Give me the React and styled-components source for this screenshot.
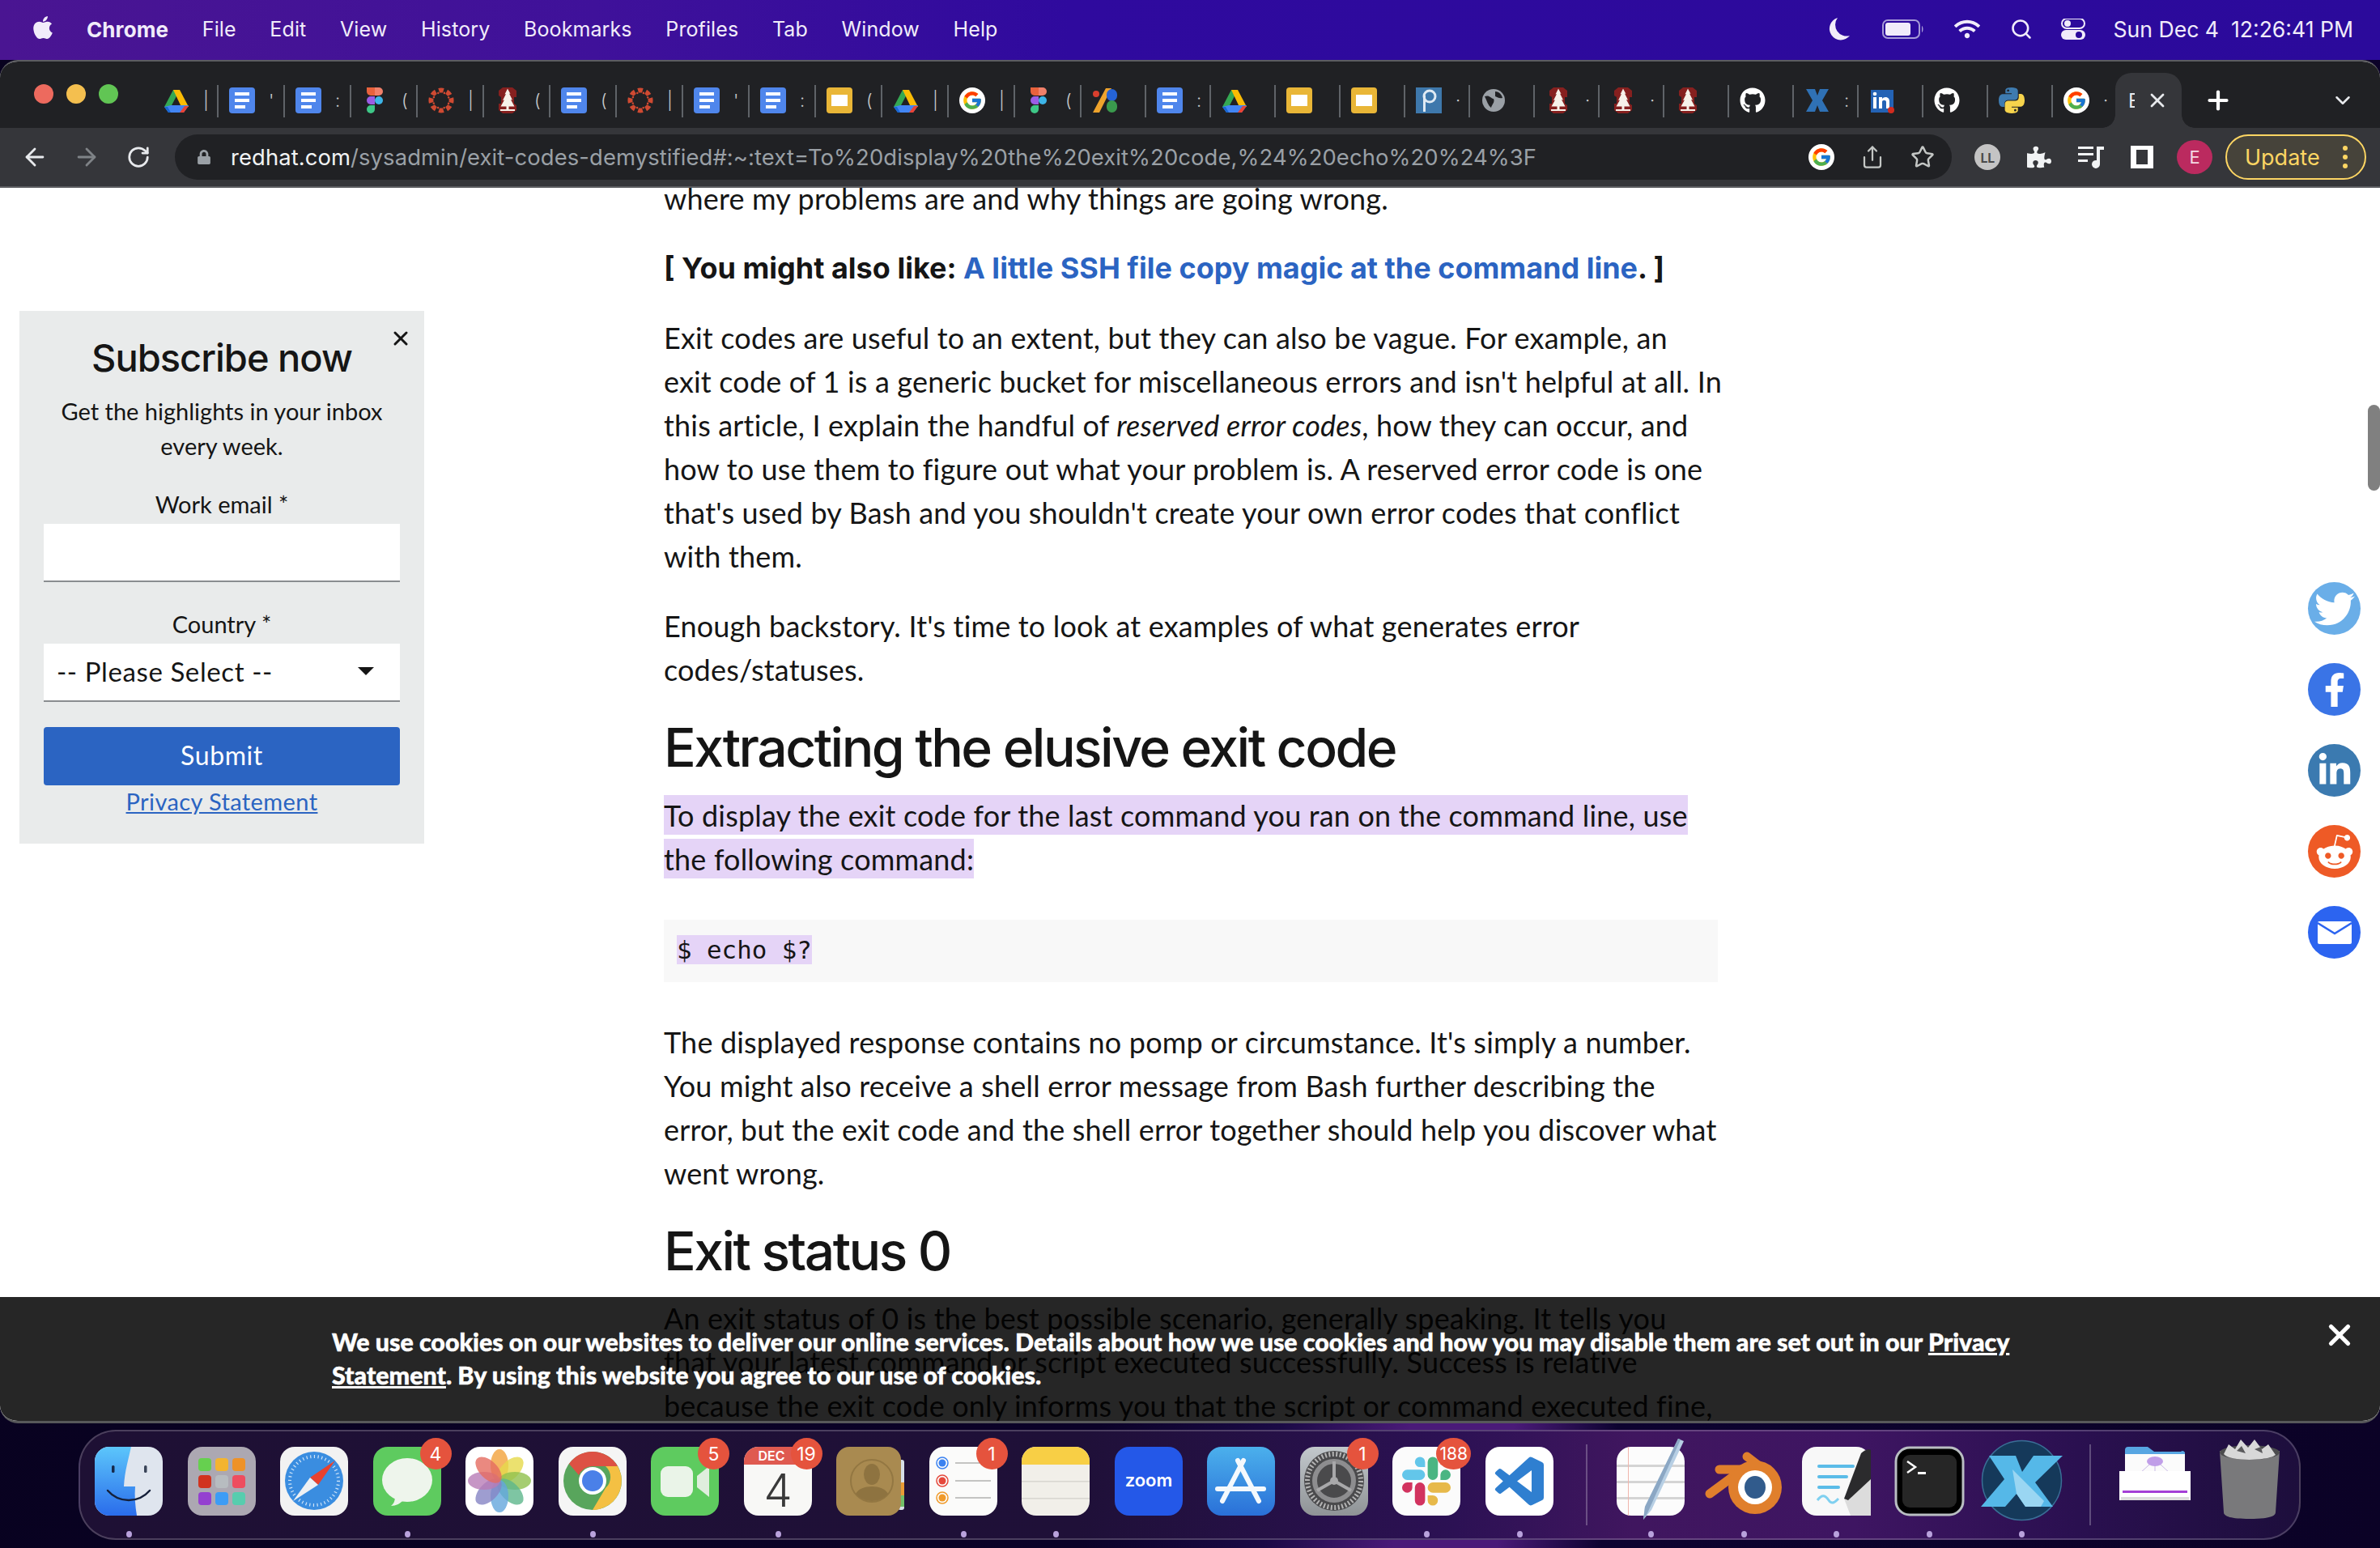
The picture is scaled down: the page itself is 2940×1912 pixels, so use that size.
import React from 'react'
import styled, { createGlobalStyle } from 'styled-components'
import { FaApple, FaGithub, FaTwitter, FaFacebookF, FaLinkedinIn, FaRedditAlien, FaPuzzlePiece, FaLock, FaWifi } from 'react-icons/fa'
import { FcGoogle } from 'react-icons/fc'
import { ArrowLeft, ArrowRight, RotateCw, Star, Share, Search, Plus, X, ChevronDown } from 'lucide-react'

const Global = createGlobalStyle`
  html, body { margin: 0; padding: 0; background: #0b0226; }
  * { box-sizing: border-box; }
  body { font-family: 'Lato', 'Liberation Sans', sans-serif; }
`

const Screen = styled.div`
  width: 2940px;
  height: 1912px;
  display: flex;
  flex-direction: column;
  overflow: hidden;
  background: linear-gradient(98deg, #08021f 0%, #0b0228 50%, #1a0a45 57%, #4a1a78 62%, #4a1a78 66%, #0d0330 70%, #0b0226 100%);
`

/* menu bar */
const MenuBar = styled.div`
  height: 74px;
  flex: none;
  display: flex;
  align-items: center;
  padding: 0 33px 2px 37px;
  color: #f1ecfa;
  background: linear-gradient(90deg, #4a1592 0%, #3f119a 25%, #2f0a9e 45%, #2b0a9b 100%);
  font-family: 'Inter', 'Liberation Sans', sans-serif;
  font-size: 25px;
`
const AppleMark = styled.span`
  display: flex;
  margin: -4px 38px 0 0;
`
const MenuItem = styled.span`
  margin-right: 41.7px;
  font-size: ${p => (p.$bold ? 26 : 25)}px;
  font-weight: ${p => (p.$bold ? 700 : 400)};
  letter-spacing: 0.1px;
`
const MenuRight = styled.div`
  margin-left: auto;
  display: flex;
  align-items: center;
`
const StatusIcon = styled.span`
  width: ${p => p.$w}px;
  display: flex;
  justify-content: center;
`
const Clock = styled.span`
  margin-left: 16px;
  white-space: pre;
  font-size: 26.6px;
`

/* chrome window */
const Window = styled.div`
  height: 1684px;
  flex: none;
  display: flex;
  flex-direction: column;
  border-radius: 22px;
  overflow: hidden;
  border-top: 2px solid #5c5d61;
  border-bottom: 3px solid #57585a;
  background: #fff;
`
const TabStrip = styled.div`
  height: 82px;
  flex: none;
  display: flex;
  align-items: flex-end;
  background: #202124;
`
const Lights = styled.div`
  width: 186px;
  height: 82px;
  flex: none;
  padding: 0 0 3px 42px;
  display: flex;
  align-items: center;
  gap: 16px;
`
const Light = styled.span`
  width: 24px;
  height: 24px;
  border-radius: 50%;
  background: ${p => p.$c};
`
const Tab = styled.div`
  width: ${p => (p.$wide ? 82 : 80)}px;
  height: 82px;
  flex: none;
  display: flex;
  align-items: center;
  padding: 14px 0 0 ${p => (p.$first ? 16 : 15)}px;
  gap: 17px;
  position: relative;
  &::before {
    content: '';
    display: ${p => (p.$first ? 'none' : 'block')};
    position: absolute;
    left: 0;
    top: 29px;
    width: 2px;
    height: 40px;
    background: #5f6368;
  }
`
const Favicon = styled.svg`
  width: 32px;
  height: 32px;
  flex: none;
`
const GithubMark = styled(FaGithub)`
  width: 32px;
  height: 32px;
  flex: none;
  color: #fff;
`
const Sliver = styled.span`
  width: 7px;
  overflow: hidden;
  color: #c9cbcd;
  font-size: 22px;
  font-family: 'Inter', sans-serif;
  font-weight: 300;
`
const ActiveTab = styled.div`
  width: 82px;
  height: 68px;
  flex: none;
  margin-left: -1px;
  background: #35363a;
  border-radius: 20px 20px 0 0;
  color: #e8eaed;
  display: flex;
  align-items: center;
  justify-content: space-between;
  padding: 0 16px 0 16px;
  font-size: 24px;
  font-family: 'Inter', sans-serif;
  position: relative;
  &::before, &::after {
    content: '';
    position: absolute;
    bottom: 0;
    width: 16px;
    height: 16px;
  }
  &::before { left: -16px; background: radial-gradient(circle at 0 0, #202124 15.5px, #35363a 16px); }
  &::after { right: -16px; background: radial-gradient(circle at 100% 0, #202124 15.5px, #35363a 16px); }
`
const ActiveTitle = styled.span`
  width: 8px;
  overflow: hidden;
`
const StripButton = styled.span`
  display: flex;
  align-items: center;
  justify-content: center;
  height: 82px;
  color: ${p => p.$c || '#fff'};
  margin-left: ${p => p.$ml}px;
  padding-top: 14px;
`

const Toolbar = styled.div`
  height: 72px;
  flex: none;
  display: flex;
  align-items: center;
  background: #35363a;
  color: #e8eaed;
`
const NavButton = styled.span`
  width: 64px;
  display: flex;
  justify-content: center;
  color: ${p => p.$c || '#e8eaed'};
  margin-left: ${p => p.$ml || 0}px;
`
const Omnibox = styled.div`
  width: 2195px;
  height: 56px;
  margin-left: 13px;
  border-radius: 28px;
  background: #202124;
  display: flex;
  align-items: center;
  padding-left: 27px;
  flex: none;
`
const Url = styled.span`
  margin-left: 24px;
  font-family: 'Inter', sans-serif;
  font-size: 27.4px;
  color: #9aa0a6;
  white-space: nowrap;
  letter-spacing: 0.1px;
  b { font-weight: 400; color: #f1f3f4; }
`
const OmniIcons = styled.div`
  margin-left: auto;
  display: flex;
  align-items: center;
  gap: 32px;
  padding-right: 21px;
  color: #c4c7c5;
`
const GoogleDot = styled.span`
  width: 32px;
  height: 32px;
  flex: none;
  border-radius: 50%;
  background: #fff;
  display: flex;
  align-items: center;
  justify-content: center;
`
const ToolIcons = styled.div`
  display: flex;
  align-items: center;
  margin-left: 28px;
  gap: 33px;
`
const Ll = styled.span`
  width: 32px;
  height: 32px;
  border-radius: 50%;
  background: #c4c4c4;
  color: #4a4a4a;
  font-size: 17px;
  font-weight: 700;
  display: flex;
  align-items: center;
  justify-content: center;
`
const Avatar = styled.span`
  width: 44px;
  height: 42px;
  margin-left: -4px;
  border-radius: 50%;
  background: #bb2a5f;
  color: #f5d9e3;
  font-family: 'Inter', sans-serif;
  font-size: 22px;
  display: flex;
  align-items: center;
  justify-content: center;
`
const UpdatePill = styled.div`
  width: 174px;
  height: 56px;
  margin-left: 16px;
  border: 2px solid #fdd663;
  border-radius: 28px;
  background: #46433a;
  color: #fdd663;
  font-family: 'Inter', sans-serif;
  font-size: 27px;
  display: flex;
  align-items: center;
  justify-content: space-between;
  padding: 0 21px 0 22px;
`
const Kebab = styled.span`
  display: flex;
  flex-direction: column;
  gap: 5px;
  i { width: 6px; height: 6px; border-radius: 50%; background: #fdd663; display: block; }
`

/* page */
const Page = styled.div`
  flex: 1;
  position: relative;
  overflow: hidden;
  background: #fff;
  border-top: 2px solid #5c5d61;
`
const Article = styled.div`
  width: 1302px;
  margin: -14px 0 0 820px;
  color: #151515;
  font-family: 'Lato', sans-serif;
  font-size: 36px;
  letter-spacing: 0.17px;
  line-height: 54px;
`
const P = styled.p`
  margin: 0 0 32px;
  white-space: nowrap;
  a { color: #2b64c2; text-decoration: none; }
`
const BoldP = styled(P)`
  font-family: 'Inter', sans-serif;
  font-weight: 700;
  font-size: 36px;
  letter-spacing: 0;
`
const H2 = styled.h2`
  margin: 18px 0 19px;
  font-family: 'Inter', sans-serif;
  font-weight: 500;
  font-size: 66px;
  line-height: 74px;
  letter-spacing: -2.55px;
  white-space: nowrap;
`
const Mark = styled.mark`
  background: #e5d4f7;
  color: #151515;
  padding: ${p => (p.$code ? 0 : '2.5px 0')};
`
const CodeBlock = styled.pre`
  margin: 49px 0 47px;
  height: 77px;
  background: #f8f8f8;
  padding: 19px 16px 0;
  font-family: 'DejaVu Sans Mono', monospace;
  font-size: 30.8px;
  letter-spacing: 0;
  line-height: 37px;
`

const Subscribe = styled.aside`
  position: absolute;
  left: 24px;
  top: 152px;
  width: 500px;
  height: 658px;
  background: #e9ebeb;
  padding: 24px 30px 0;
  text-align: center;
  color: #151515;
  font-size: 29px;
`
const SubTitle = styled.h3`
  margin: 3px 0 0;
  font-family: 'Inter', sans-serif;
  font-weight: 500;
  font-size: 47px;
  line-height: 62px;
  letter-spacing: -1px;
`
const SubText = styled.p`
  margin: 13px 0 0;
  line-height: 43px;
`
const Close = styled.span`
  position: absolute;
  top: 19px;
  right: 15px;
  color: #151515;
`
const FieldLabel = styled.div`
  margin-top: ${p => p.$mt}px;
  line-height: 40px;
`
const Field = styled.div`
  height: 72px;
  background: #fff;
  border-bottom: 2px solid #8a8d90;
  display: flex;
  align-items: center;
  justify-content: space-between;
  padding: 0 32px 3px 16px;
  font-size: 33px;
  letter-spacing: 0.6px;
  margin-top: 4px;
`
const Caret = styled.span`
  width: 0;
  height: 0;
  border-left: 10px solid transparent;
  border-right: 10px solid transparent;
  border-top: 10px solid #151515;
`
const SubmitButton = styled.div`
  height: 72px;
  margin-top: 31px;
  padding-bottom: 3px;
  background: #2b64c2;
  border-radius: 4px;
  color: #fff;
  font-size: 32px;
  letter-spacing: 0.6px;
  display: flex;
  align-items: center;
  justify-content: center;
`
const PrivacyLink = styled.a`
  display: block;
  margin-top: 0;
  color: #2b64c2;
  text-decoration: underline;
  line-height: 40px;
  letter-spacing: 0.4px;
`

const Shares = styled.div`
  position: absolute;
  top: 487px;
  right: 24px;
  display: flex;
  flex-direction: column;
  gap: 35px;
`
const ShareDot = styled.span`
  width: 65px;
  height: 65px;
  border-radius: 50%;
  background: ${p => p.$c};
  color: #fff;
  display: flex;
  align-items: center;
  justify-content: center;
`
const Scrollbar = styled.div`
  position: absolute;
  right: 0;
  top: 268px;
  width: 15px;
  height: 106px;
  border-radius: 8px;
  background: #808080;
`
const Cookie = styled.div`
  position: absolute;
  left: 0;
  right: 0;
  bottom: 0;
  height: 153px;
  background: rgba(0, 0, 0, 0.85);
  color: #fff;
  padding: 35px 0 0 410px;
  font-size: 30.4px;
  font-weight: 900;
  line-height: 41px;
  white-space: nowrap;
  -webkit-text-stroke: 0.5px #fff;
  a { color: #fff; text-decoration: underline; }
`
const CookieClose = styled.span`
  position: absolute;
  top: 26px;
  right: 29px;
  color: #fff;
`

/* dock */
const DockArea = styled.div`
  flex: 1;
  padding: 8px 98px 10px 97px;
`
const Dock = styled.div`
  height: 136px;
  border: 2px solid rgba(255, 255, 255, 0.2);
  border-radius: 46px;
  background: linear-gradient(90deg, #1e1034 0%, #1f1038 45%, #2c1154 62%, #40165f 70%, #3e1562 80%, #2a1050 90%, #1d0e3c 100%);
  display: flex;
  padding: 19px 0 0 18px;
`
const Slot = styled.div`
  width: ${p => p.$w || 84}px;
  height: 85px;
  margin-right: ${p => (p.$mr === undefined ? 30.5 : p.$mr)}px;
  flex: none;
  position: relative;
  &::after {
    content: '';
    display: ${p => (p.$dot ? 'block' : 'none')};
    position: absolute;
    left: 50%;
    bottom: -27px;
    width: 7px;
    height: 8px;
    margin-left: -3px;
    border-radius: 50%;
    background: #b9a2dc;
  }
`
const DockSvg = styled.svg`
  width: 100%;
  height: 100%;
  display: block;
  overflow: visible;
`
const Badge = styled.span`
  position: absolute;
  right: -13px;
  top: -11px;
  min-width: 39px;
  height: 39px;
  padding: 0 4px;
  border-radius: 50%;
  background: #e5533d;
  color: #fff;
  font-family: 'Inter', sans-serif;
  font-size: ${p => (p.$small ? 21 : 23)}px;
  display: flex;
  align-items: center;
  justify-content: center;
`
const Divider = styled.span`
  width: 2px;
  height: 100px;
  margin: -3px ${p => p.$mr}px 0 0;
  flex: none;
  background: rgba(255, 255, 255, 0.25);
`

function Drive() {
  return <Favicon viewBox="0 0 32 32">
    <polygon points="12,3 20,3 9,24 1,24" fill="#34a853" />
    <polygon points="20,3 31,24 22,24 12,3" fill="#fbbc04" />
    <polygon points="9,22 31,22 25,31 6,31 1,24" fill="#4285f4" />
    <polygon points="31,23 25,31 20,31 26,23" fill="#ea4335" />
    <polygon points="1,24 6,31 9,31 5,24" fill="#1967d2" />
  </Favicon>
}
function Doc() {
  return <Favicon viewBox="0 0 32 32">
    <rect width="32" height="32" rx="4" fill="#4f86ec" />
    <rect x="7" y="6" width="18" height="4" fill="#fff" />
    <rect x="7" y="14" width="18" height="4" fill="#fff" />
    <rect x="7" y="22" width="13" height="4" fill="#fff" />
  </Favicon>
}
function Slides() {
  return <Favicon viewBox="0 0 32 32">
    <rect width="32" height="32" rx="4" fill="#e9b637" />
    <rect x="6" y="9" width="20" height="14" fill="#fff" />
  </Favicon>
}
function Figma() {
  return <Favicon viewBox="0 0 32 32">
    <path d="M6 0h10v10H11a5 5 0 0 1-5-5z" fill="#e8623d" />
    <path d="M16 0h5a5 5 0 0 1 0 10h-5z" fill="#f0806a" />
    <path d="M11 11h5v10h-5a5 5 0 0 1 0-10z" fill="#9b5de5" />
    <circle cx="21" cy="16" r="5" fill="#3db5e8" />
    <path d="M11 22h5v5a5 5 0 1 1-5-5z" fill="#3ec787" />
  </Favicon>
}
function Canvas() {
  const spokes = [0, 45, 90, 135, 180, 225, 270, 315]
  return <Favicon viewBox="0 0 32 32">
    {spokes.map(a => <g key={a} transform={`rotate(${a} 16 16)`}>
      <path d="M12.300 .9a15.500 15.500 0 0 1 7.400 0L18 6.600a9.500 9.500 0 0 0-4 0z" fill="#cf4a32" />
      <circle cx="19.900" cy="6.900" r="1.300" fill="#cf4a32" />
    </g>)}
  </Favicon>
}
function Stanford() {
  return <Favicon viewBox="0 0 32 32">
    <path d="M10 0h12l5 4v8h-3v8l3 2v6l-5 4H10l-5-4v-8h3v-8l-3-2V4z" fill="#86201f" />
    <path d="M16 1.500l3.500 6.500-1.500-.5 4 8-2-.5 4.500 8.500h-7v4h-3v-4h-7L12 15.500l-2 .5 4-8-1.500.5z" fill="#f7f2ea" />
    <rect x="7" y="27" width="18" height="2" fill="#f7f2ea" />
  </Favicon>
}
function Google() {
  return <GoogleDot><FcGoogle size={26} /></GoogleDot>
}
function XColors() {
  return <Favicon viewBox="0 0 32 32">
    <circle cx="5" cy="8" r="4" fill="#d93f2e" />
    <polygon points="17,1 24,1 9,31 1,31" fill="#eea32c" />
    <rect x="18" y="2" width="13" height="15" rx="6.500" fill="#2563d6" />
    <rect x="18" y="16" width="13" height="15" rx="6.500" fill="#3a9a4d" />
  </Favicon>
}
function Piazza() {
  return <Favicon viewBox="0 0 32 32">
    <rect width="32" height="32" fill="#3e78ac" />
    <circle cx="17" cy="11" r="7" fill="none" stroke="#dfeaf3" strokeWidth="3" />
    <rect x="9" y="10" width="3" height="20" fill="#dfeaf3" />
  </Favicon>
}
function Globe() {
  return <Favicon viewBox="0 0 32 32">
    <circle cx="16" cy="16" r="14" fill="#9aa0a6" />
    <path d="M5 11c6-2 7 2 11 3 2 4-2 7-3 11-4-3-5-8-8-14zM18 5c5 0 8 4 9 8-4 1-6-1-9-2z" fill="#202124" />
  </Favicon>
}
function Github() {
  return <GithubMark />
}
function XBlue() {
  return <Favicon viewBox="0 0 32 32">
    <path d="M2 2h11l3 8 3-8h11l-8 14 8 14H19l-3-8-3 8H2l8-14z" fill="#2f71b5" />
  </Favicon>
}
function Linkedin() {
  return <Favicon viewBox="0 0 32 32">
    <rect x="2" y="3" width="28" height="28" fill="#2463b5" />
    <rect x="5" y="12" width="4" height="14" fill="#fff" />
    <circle cx="7" cy="8" r="2.300" fill="#fff" />
    <path d="M12 12h4v2c2-3 9-3 9 3v9h-4v-8c0-3-5-3-5 0v8h-4z" fill="#fff" />
    <circle cx="27" cy="28" r="4" fill="#d22c1f" />
  </Favicon>
}
function Python() {
  return <Favicon viewBox="0 0 24 24">
    <path d="M11.914 0C5.82 0 6.2 2.656 6.2 2.656l.007 2.752h5.814v.826H3.9S0 5.789 0 11.969c0 6.18 3.403 5.96 3.403 5.96h2.03v-2.867s-.109-3.42 3.35-3.42h5.766s3.24.052 3.24-3.148V3.202S18.28 0 11.913 0zM8.708 1.85c.578 0 1.046.47 1.046 1.052 0 .581-.468 1.051-1.046 1.051-.579 0-1.046-.47-1.046-1.051 0-.582.467-1.052 1.046-1.052z" fill="#3e7bb0" />
    <path d="M12.087 24c6.092 0 5.712-2.656 5.712-2.656l-.007-2.752h-5.814v-.826h8.123s3.9.445 3.9-5.735c0-6.18-3.404-5.96-3.404-5.96h-2.03v2.867s.109 3.42-3.35 3.42H8.95s-3.24-.052-3.24 3.148v5.292S5.72 24 12.087 24zm3.206-1.850c-.578 0-1.046-.47-1.046-1.052 0-.581.468-1.051 1.046-1.051.579 0 1.046.47 1.046 1.051 0 .582-.467 1.052-1.046 1.052z" fill="#f7d44c" />
  </Favicon>
}

const tabs = [
  [Drive, '|', 1], [Doc, "'", 1], [Doc, ':', 1], [Figma, '(', 1], [Canvas, '|', 1], [Stanford, '(', 1], [Doc, '(', 1],
  [Canvas, '|', 1], [Doc, "'", 1], [Doc, ':', 1], [Slides, '(', 1], [Drive, '|', 1], [Google, '|', 1], [Figma, '(', 1],
  [XColors, ''], [Doc, ':'], [Drive, ''], [Slides, ''], [Slides, ''], [Piazza, '·'], [Globe, ''], [Stanford, '·'],
  [Stanford, '·'], [Stanford, ''], [Github, ''], [XBlue, ':'], [Linkedin, ''], [Github, ''], [Python, ''], [Google, '·'],
]

const DockIcons = {
  finder: <DockSvg viewBox="0 0 84 85">
    <defs><linearGradient id="fb" x1="0" y1="0" x2="0" y2="1"><stop offset="0" stopColor="#5cc6fb" /><stop offset="1" stopColor="#2a6ceb" /></linearGradient></defs>
    <rect width="84" height="85" rx="18" fill="#dfe5ee" />
    <path d="M18 0h27c-3 14-8 30-9 49h14c-1 12 0 24 2 36H18A18 18 0 0 1 0 67V18A18 18 0 0 1 18 0z" fill="url(#fb)" />
    <rect x="21" y="23" width="3.500" height="9" rx="1.500" fill="#16294b" />
    <rect x="61" y="23" width="3.500" height="9" rx="1.500" fill="#3a4458" />
    <path d="M16 54c14 16 38 16 52 0" fill="none" stroke="#15203a" strokeWidth="2.500" strokeLinecap="round" />
  </DockSvg>,
  launchpad: <DockSvg viewBox="0 0 84 85">
    <rect width="84" height="85" rx="18" fill="#aca8b2" />
    {[['#66d04f', 13, 14], ['#f3b42f', 34, 14], ['#ee9228', 55, 14], ['#d1331f', 13, 35], ['#b7bcc0', 34, 35], ['#ee4d5f', 55, 35], ['#9440d0', 13, 56], ['#3d9cf5', 34, 56], ['#57cdae', 55, 56]].map(([c, x, y]) =>
      <rect key={c} x={x} y={y} width="16" height="16" rx="4" fill={c} />)}
  </DockSvg>,
  safari: <DockSvg viewBox="0 0 84 85">
    <rect width="84" height="85" rx="18" fill="#f2f2f2" />
    <circle cx="42" cy="42" r="36" fill="#3a8de0" />
    <circle cx="42" cy="42" r="30" fill="none" stroke="#cfe4f8" strokeWidth="4" strokeDasharray="1.200 3.500" />
    <polygon points="68,17 47,47 37,38" fill="#e8412e" />
    <polygon points="16,67 47,47 37,38" fill="#eef1f4" />
  </DockSvg>,
  messages: <DockSvg viewBox="0 0 84 85">
    <rect width="84" height="85" rx="18" fill="#5ecb5f" />
    <ellipse cx="42" cy="41" rx="31" ry="27" fill="#eef5ec" />
    <path d="M27 60c0 6-1 10-5 13 6 0 12-3 16-8z" fill="#eef5ec" />
  </DockSvg>,
  photos: <DockSvg viewBox="0 0 84 85">
    <rect width="84" height="85" rx="18" fill="#fff" />
    {[['#f2a33c', 0], ['#e6d94b', 45], ['#90c14d', 90], ['#5eb68c', 135], ['#64a6dc', 180], ['#8684c4', 225], ['#b87cb6', 270], ['#e56b60', 315]].map(([c, a]) =>
      <ellipse key={a} cx="42" cy="23" rx="11" ry="20" fill={c} opacity="0.8" transform={`rotate(${a} 42 42)`} />)}
  </DockSvg>,
  chrome: <DockSvg viewBox="0 0 84 85">
    <rect width="84" height="85" rx="18" fill="#f5f5f5" />
    <circle cx="42" cy="42" r="36" fill="#58a55c" />
    <path d="M42 6a36 36 0 0 1 31 18H42a18 18 0 0 0-17 11L13 21A36 36 0 0 1 42 6z" fill="#dd5144" />
    <path d="M73 24a36 36 0 0 1-31 54l16-27a18 18 0 0 0 0-27z" fill="#f4c043" />
    <circle cx="42" cy="42" r="17" fill="#fff" />
    <circle cx="42" cy="42" r="13" fill="#4a80e8" />
  </DockSvg>,
  facetime: <DockSvg viewBox="0 0 84 85">
    <rect width="84" height="85" rx="18" fill="#5ecb5f" />
    <rect x="12" y="24" width="40" height="38" rx="9" fill="#eaf4e8" />
    <path d="M57 36l15-12v38L57 50z" fill="#dfeedd" />
  </DockSvg>,
  calendar: <DockSvg viewBox="0 0 84 85">
    <rect width="84" height="85" rx="18" fill="#f8f8f6" />
    <path d="M0 22V18A18 18 0 0 1 18 0h48a18 18 0 0 1 18 18v4z" fill="#df5a50" />
    <text x="34" y="17" textAnchor="middle" fill="#fff" fontFamily="Inter, sans-serif" fontWeight="600" fontSize="16">DEC</text>
    <text x="42" y="74" textAnchor="middle" fill="#3a3a3a" fontFamily="Inter, sans-serif" fontWeight="300" fontSize="56">4</text>
  </DockSvg>,
  contacts: <DockSvg viewBox="0 0 84 85">
    <rect x="76" y="16" width="8" height="62" rx="3" fill="#d7dfe6" />
    <rect x="76" y="44" width="8" height="16" fill="#e99b35" />
    <rect x="76" y="60" width="8" height="14" fill="#71bf68" />
    <rect width="80" height="85" rx="16" fill="#a98a50" />
    <circle cx="44" cy="42" r="26" fill="none" stroke="#937742" strokeWidth="2" />
    <ellipse cx="44" cy="34" rx="10" ry="13" fill="#8e7340" />
    <path d="M24 58c6-12 34-12 40 0-10 12-30 12-40 0z" fill="#8e7340" />
  </DockSvg>,
  reminders: <DockSvg viewBox="0 0 84 85">
    <rect width="84" height="85" rx="18" fill="#fbfbfa" />
    {[['#3b82f0', 20], ['#e5483b', 42], ['#f09a2a', 63]].map(([c, y]) => <g key={y}>
      <circle cx="16" cy={y} r="7" fill="none" stroke={c} strokeWidth="1.500" />
      <circle cx="16" cy={y} r="4.500" fill={c} />
      <rect x="32" y={y - 1} width="44" height="2" fill="#c4c4c2" />
    </g>)}
  </DockSvg>,
  notes: <DockSvg viewBox="0 0 84 85">
    <rect width="84" height="85" rx="18" fill="#f1efe9" />
    <path d="M0 22V18A18 18 0 0 1 18 0h48a18 18 0 0 1 18 18v4z" fill="#f8cf45" />
    <rect y="42" width="84" height="1.500" fill="#d8d6d0" />
    <rect y="63" width="84" height="1.500" fill="#d8d6d0" />
  </DockSvg>,
  zoom: <DockSvg viewBox="0 0 84 85">
    <rect width="84" height="85" rx="18" fill="#2458e8" />
    <text x="42" y="49" textAnchor="middle" fill="#fff" fontFamily="Inter, sans-serif" fontWeight="600" fontSize="22">zoom</text>
  </DockSvg>,
  appstore: <DockSvg viewBox="0 0 84 85">
    <defs><linearGradient id="as" x1="0" y1="0" x2="0" y2="1"><stop offset="0" stopColor="#4bb0ec" /><stop offset="1" stopColor="#2a70d8" /></linearGradient></defs>
    <rect width="84" height="85" rx="18" fill="url(#as)" />
    <g stroke="#f4f9fd" strokeWidth="6" strokeLinecap="round" fill="none">
      <path d="M45 17L19 67" /><path d="M38 17l26 50" /><path d="M13 52h57" />
    </g>
  </DockSvg>,
  prefs: <DockSvg viewBox="0 0 84 85">
    <defs><linearGradient id="pr" x1="0" y1="0" x2="0" y2="1"><stop offset="0" stopColor="#c2c8cc" /><stop offset="1" stopColor="#8f9396" /></linearGradient></defs>
    <rect width="84" height="85" rx="18" fill="url(#pr)" />
    <circle cx="42" cy="42" r="37" fill="#4a4a4c" />
    <circle cx="42" cy="42" r="33" fill="none" stroke="#b5b5b5" strokeWidth="6" strokeDasharray="2 2.500" />
    <circle cx="42" cy="42" r="24" fill="none" stroke="#8d8d8f" strokeWidth="6" />
    <g stroke="#a8a8aa" strokeWidth="4"><path d="M42 42V18" /><path d="M42 42l21 12" /><path d="M42 42L21 54" /></g>
    <circle cx="42" cy="42" r="5" fill="#a8a8aa" />
  </DockSvg>,
  slack: <DockSvg viewBox="0 0 84 85">
    <rect width="84" height="85" rx="18" fill="#fbfbfb" />
    <g transform="translate(12 12.500) scale(2.500)">
      <path d="M5.042 15.165a2.528 2.528 0 0 1-2.52 2.523A2.528 2.528 0 0 1 0 15.165a2.527 2.527 0 0 1 2.522-2.52h2.52v2.52zM6.313 15.165a2.527 2.527 0 0 1 2.521-2.52 2.527 2.527 0 0 1 2.521 2.52v6.313A2.528 2.528 0 0 1 8.834 24a2.528 2.528 0 0 1-2.521-2.522v-6.313z" fill="#d2335f" />
      <path d="M8.834 5.042a2.528 2.528 0 0 1-2.521-2.52A2.528 2.528 0 0 1 8.834 0a2.528 2.528 0 0 1 2.521 2.522v2.52H8.834zM8.834 6.313a2.528 2.528 0 0 1 2.521 2.521 2.528 2.528 0 0 1-2.521 2.521H2.522A2.528 2.528 0 0 1 0 8.834a2.528 2.528 0 0 1 2.522-2.521h6.312z" fill="#63c6ea" />
      <path d="M18.956 8.834a2.528 2.528 0 0 1 2.522-2.521A2.528 2.528 0 0 1 24 8.834a2.528 2.528 0 0 1-2.522 2.521h-2.522V8.834zM17.688 8.834a2.528 2.528 0 0 1-2.523 2.521 2.527 2.527 0 0 1-2.52-2.521V2.522A2.527 2.527 0 0 1 15.165 0a2.528 2.528 0 0 1 2.523 2.522v6.312z" fill="#4ab583" />
      <path d="M15.165 18.956a2.528 2.528 0 0 1 2.523 2.522A2.528 2.528 0 0 1 15.165 24a2.527 2.527 0 0 1-2.52-2.522v-2.522h2.52zM15.165 17.688a2.527 2.527 0 0 1-2.52-2.523 2.526 2.526 0 0 1 2.52-2.52h6.313A2.527 2.527 0 0 1 24 15.165a2.528 2.528 0 0 1-2.522 2.523h-6.313z" fill="#e7b94a" />
    </g>
  </DockSvg>,
  vscode: <DockSvg viewBox="0 0 84 85">
    <rect width="84" height="85" rx="18" fill="#fff" />
    <g transform="translate(12 12.500) scale(2.500)">
      <path d="M23.15 2.587L18.21.21a1.494 1.494 0 0 0-1.705.29l-9.46 8.63-4.12-3.128a.999.999 0 0 0-1.276.057L.327 7.261A1 1 0 0 0 .326 8.74L3.899 12 .326 15.26a1 1 0 0 0 .001 1.479L1.65 17.94a.999.999 0 0 0 1.276.057l4.12-3.128 9.46 8.63a1.492 1.492 0 0 0 1.704.29l4.942-2.377A1.500 1.500 0 0 0 24 20.06V3.939a1.500 1.500 0 0 0-.85-1.352zm-5.146 14.861L10.826 12l7.178-5.448v10.896z" fill="#2f7fd0" />
    </g>
  </DockSvg>,
  textedit: <DockSvg viewBox="0 0 84 85">
    <rect width="84" height="85" rx="18" fill="#fcfcfc" />
    {[22, 42, 62].map(y => <rect key={y} y={y} width="84" height="3" fill="#d4d4d4" />)}
    <rect x="14" width="1" height="85" fill="#f0b5ac" />
    <polygon points="76,-10 83,-7 43,78 33,90 35,74" fill="#b7cfe4" />
    <polygon points="76,-10 79,-9 38,82 33,90 35,74" fill="#8ba7c4" />
  </DockSvg>,
  blender: <DockSvg viewBox="0 0 97 85">
    <g stroke="#e07f2c" strokeLinecap="round" fill="none" strokeWidth="11">
      <path d="M52 12L78 32" /><path d="M18 28H54" /><path d="M6 58L44 30" />
    </g>
    <circle cx="62" cy="50" r="33" fill="#e07f2c" />
    <circle cx="62" cy="50" r="21" fill="#fff" />
    <ellipse cx="62" cy="50" rx="13" ry="14" fill="#315b8c" />
  </DockSvg>,
  pen: <DockSvg viewBox="0 0 85 85">
    <rect width="85" height="85" rx="18" fill="#f8f8f8" />
    <g fill="#5bbce8"><rect x="19" y="22" width="46" height="4" rx="2" /><rect x="19" y="35" width="38" height="4" rx="2" /><rect x="19" y="48" width="28" height="4" rx="2" /></g>
    <path d="M19 66c6-8 10-6 14 0s8 2 12-2" fill="none" stroke="#7fd0f0" strokeWidth="3" />
    <path d="M85 85H60L52 64l33-40z" fill="#dcdcdc" />
    <path d="M52 64L73 8c4-4 10-6 12-4v36L57 66z" fill="#2b2b2d" />
  </DockSvg>,
  terminal: <DockSvg viewBox="0 0 85 85">
    <rect x="1" y="1" width="83" height="83" rx="17" fill="#000" stroke="#b9bec2" strokeWidth="3" />
    <rect x="9" y="10" width="67" height="65" rx="9" fill="#262626" />
    <path d="M15 18l10 7-10 7" fill="none" stroke="#fff" strokeWidth="2.500" />
    <rect x="28" y="31" width="10" height="3" fill="#fff" />
  </DockSvg>,
  xlogo: <DockSvg viewBox="0 0 99 85">
    <g transform="translate(0 -8)">
      <ellipse cx="49.500" cy="49.500" rx="49" ry="49" fill="#15395a" stroke="#3a6e96" strokeWidth="1.500" />
      <path d="M9 19h33l8 20 14-20h36L66 52l22 30H54L43 66 29 82H-1l29-34z" fill="#55b8e8" />
      <path d="M38 36L77 75l-4 7H54L43 66z" fill="#9ad6f2" />
    </g>
  </DockSvg>,
  stack: <DockSvg viewBox="0 0 88 85">
    <path d="M7 4a4 4 0 0 1 4-4h24l8 6h33a3 3 0 0 1 5 3v6H7z" fill="#57a6e2" />
    <rect x="7" y="9" width="74" height="24" fill="#fbfbfb" />
    <ellipse cx="44" cy="18" rx="10" ry="6" fill="#c09ee8" />
    <g stroke="#c9b8e6" strokeWidth="1"><path d="M37 22l-12 11" /><path d="M44 24v9" /><path d="M51 22l12 11" /></g>
    <rect y="30" width="88" height="36" fill="#fff" />
    <rect x="4" y="54" width="80" height="3" fill="#a43fd6" />
    <rect x="2" y="62" width="84" height="4" fill="#dcdcdc" />
  </DockSvg>,
  trash: <DockSvg viewBox="0 0 76 85">
    <g transform="translate(0 -9)">
      <path d="M1 14h74l-5 76c0 5-9 8-32 8S6 95 6 90z" fill="#79797b" />
      <ellipse cx="38" cy="16" rx="37" ry="9" fill="#4c4c4e" />
      <path d="M6 18l6-12 8 6 7-12 9 10 8-10 9 12 8-6 9 13c-10 8-58 8-64-1z" fill="#d8d8d8" />
      <path d="M22 14l6-6 5 9zM44 12l8-3 2 8z" fill="#5a5a5c" />
    </g>
  </DockSvg>,
}

function DockItem({ name, dot, badge, w, mr }) {
  return <Slot $dot={dot} $w={w} $mr={mr}>
    {DockIcons[name]}
    {badge && <Badge $small={badge.length > 2}>{badge}</Badge>}
  </Slot>
}

function App() {
  return <Screen>
    <Global />
    <MenuBar>
      <AppleMark><FaApple size={32} /></AppleMark>
      <MenuItem $bold>Chrome</MenuItem>
      {['File', 'Edit', 'View', 'History', 'Bookmarks', 'Profiles', 'Tab', 'Window', 'Help'].map(m => <MenuItem key={m}>{m}</MenuItem>)}
      <MenuRight>
        <StatusIcon $w={72}>
          <svg width="27" height="30" viewBox="0 0 27 30"><path d="M11 1a14 14 0 0 0 15 22A14 14 0 1 1 11 1z" fill="#f1ecfa" /></svg>
        </StatusIcon>
        <StatusIcon $w={86}>
          <svg width="52" height="24" viewBox="0 0 52 24"><rect x="1" y="1" width="45" height="22" rx="6" fill="none" stroke="#a79bd8" strokeWidth="2" /><rect x="4" y="4" width="31" height="16" rx="3" fill="#f1ecfa" /><path d="M49 8c2 1 2 7 0 8z" fill="#a79bd8" /></svg>
        </StatusIcon>
        <StatusIcon $w={72}><FaWifi size={32} /></StatusIcon>
        <StatusIcon $w={62}><Search size={28} strokeWidth={2.2} /></StatusIcon>
        <StatusIcon $w={66}>
          <svg width="30" height="26" viewBox="0 0 30 26"><rect x="1" y="0" width="28" height="12" rx="6" fill="none" stroke="#f1ecfa" strokeWidth="2" /><circle cx="8" cy="6" r="4" fill="#f1ecfa" /><rect x="0" y="14" width="30" height="12" rx="6" fill="#f1ecfa" /><circle cx="22" cy="20" r="4" fill="#2b0a9b" /></svg>
        </StatusIcon>
        <Clock>{'Sun Dec 4  12:26:41 PM'}</Clock>
      </MenuRight>
    </MenuBar>

    <Window>
      <TabStrip>
        <Lights>
          <Light $c="#ed6a5e" />
          <Light $c="#f4bf4f" />
          <Light $c="#61c554" />
        </Lights>
        {tabs.map(([Icon, title, wide], i) => <Tab key={i} $wide={wide} $first={i === 0}>
          <Icon />
          <Sliver>{title}</Sliver>
        </Tab>)}
        <ActiveTab><ActiveTitle>E</ActiveTitle><X size={28} strokeWidth={2.4} /></ActiveTab>
        <StripButton $ml={27}><Plus size={36} strokeWidth={2.8} /></StripButton>
        <StripButton $ml={121} $c="#e8eaed"><ChevronDown size={30} strokeWidth={2} /></StripButton>
      </TabStrip>

      <Toolbar>
        <NavButton $ml={11}><ArrowLeft size={34} strokeWidth={2} /></NavButton>
        <NavButton $c="#7f8387"><ArrowRight size={34} strokeWidth={2} /></NavButton>
        <NavButton><RotateCw size={30} strokeWidth={2.2} /></NavButton>
        <Omnibox>
          <FaLock size={18} color="#9aa0a6" />
          <Url><b>redhat.com</b>/sysadmin/exit-codes-demystified#:~:text=To%20display%20the%20exit%20code,%24%20echo%20%24%3F</Url>
          <OmniIcons>
            <GoogleDot><FcGoogle size={26} /></GoogleDot>
            <Share size={30} strokeWidth={1.8} />
            <Star size={30} strokeWidth={2} />
          </OmniIcons>
        </Omnibox>
        <ToolIcons>
          <Ll>LL</Ll>
          <FaPuzzlePiece size={30} color="#f1f3f4" />
          <svg width="32" height="30" viewBox="0 0 32 30">
            <g fill="#f1f3f4"><rect y="2" width="19" height="3" /><rect y="10" width="19" height="3" /><rect y="18" width="12" height="3" /><path d="M23 2h9v4h-5v18a5 5 0 1 1-4-5z" /></g>
          </svg>
          <svg width="28" height="28" viewBox="0 0 28 28"><path d="M0 0h28v28H0zM7 5v18h14V5z" fill="#fff" fillRule="evenodd" /></svg>
          <Avatar>E</Avatar>
        </ToolIcons>
        <UpdatePill>
          Update
          <Kebab><i /><i /><i /></Kebab>
        </UpdatePill>
      </Toolbar>

      <Page>
        <Article>
          <P>where my problems are and why things are going wrong.</P>
          <BoldP>[ You might also like: <a>A little SSH file copy magic at the command line</a>. ]</BoldP>
          <P>
            Exit codes are useful to an extent, but they can also be vague. For example, an<br />
            exit code of 1 is a generic bucket for miscellaneous errors and isn't helpful at all. In<br />
            this article, I explain the handful of <em>reserved error codes</em>, how they can occur, and<br />
            how to use them to figure out what your problem is. A reserved error code is one<br />
            that's used by Bash and you shouldn't create your own error codes that conflict<br />
            with them.
          </P>
          <P>
            Enough backstory. It's time to look at examples of what generates error<br />
            codes/statuses.
          </P>
          <H2>Extracting the elusive exit code</H2>
          <P>
            <Mark>To display the exit code for the last command you ran on the command line, use</Mark><br />
            <Mark>the following command:</Mark>
          </P>
          <CodeBlock><Mark $code>$ echo $?</Mark></CodeBlock>
          <P>
            The displayed response contains no pomp or circumstance. It's simply a number.<br />
            You might also receive a shell error message from Bash further describing the<br />
            error, but the exit code and the shell error together should help you discover what<br />
            went wrong.
          </P>
          <H2>Exit status 0</H2>
          <P>
            An exit status of 0 is the best possible scenario, generally speaking. It tells you<br />
            that your latest command or script executed successfully. Success is relative<br />
            because the exit code only informs you that the script or command executed fine,
          </P>
        </Article>

        <Subscribe>
          <Close><X size={28} strokeWidth={2.6} /></Close>
          <SubTitle>Subscribe now</SubTitle>
          <SubText>Get the highlights in your inbox<br />every week.</SubText>
          <FieldLabel $mt={31}>Work email *</FieldLabel>
          <Field />
          <FieldLabel $mt={32}>Country *</FieldLabel>
          <Field>-- Please Select --<Caret /></Field>
          <SubmitButton>Submit</SubmitButton>
          <PrivacyLink>Privacy Statement</PrivacyLink>
        </Subscribe>

        <Scrollbar />
        <Shares>
          <ShareDot $c="#6aaee8"><FaTwitter size={50} /></ShareDot>
          <ShareDot $c="#3a74e6"><FaFacebookF size={42} /></ShareDot>
          <ShareDot $c="#3b7ab0"><FaLinkedinIn size={44} /></ShareDot>
          <ShareDot $c="#ee5a26"><FaRedditAlien size={48} /></ShareDot>
          <ShareDot $c="#2c64f0">
            <svg width="42" height="28" viewBox="0 0 42 28">
              <rect width="42" height="28" rx="2" fill="#fff" />
              <path d="M0 2l21 13L42 2" fill="none" stroke="#2c64f0" strokeWidth="2.500" />
            </svg>
          </ShareDot>
        </Shares>

        <Cookie>
          We use cookies on our websites to deliver our online services. Details about how we use cookies and how you may disable them are set out in our <a>Privacy</a><br />
          <a>Statement</a>. By using this website you agree to our use of cookies.
          <CookieClose><X size={42} strokeWidth={3} /></CookieClose>
        </Cookie>
      </Page>
    </Window>

    <DockArea>
      <Dock>
        <DockItem name="finder" dot />
        <DockItem name="launchpad" />
        <DockItem name="safari" />
        <DockItem name="messages" dot badge="4" />
        <DockItem name="photos" />
        <DockItem name="chrome" dot />
        <DockItem name="facetime" badge="5" />
        <DockItem name="calendar" dot badge="19" />
        <DockItem name="contacts" />
        <DockItem name="reminders" dot badge="1" />
        <DockItem name="notes" dot />
        <DockItem name="zoom" />
        <DockItem name="appstore" />
        <DockItem name="prefs" badge="1" />
        <DockItem name="slack" dot badge="188" />
        <DockItem name="vscode" dot mr={40} />
        <Divider $mr={36} />
        <DockItem name="textedit" dot mr={25} />
        <DockItem name="blender" dot w={97} mr={23} />
        <DockItem name="pen" dot w={85} mr={30} />
        <DockItem name="terminal" dot w={85} mr={22} />
        <DockItem name="xlogo" dot w={99} mr={34} />
        <Divider $mr={35} />
        <DockItem name="stack" w={88} mr={35} />
        <DockItem name="trash" w={76} />
      </Dock>
    </DockArea>
  </Screen>
}

export default App
